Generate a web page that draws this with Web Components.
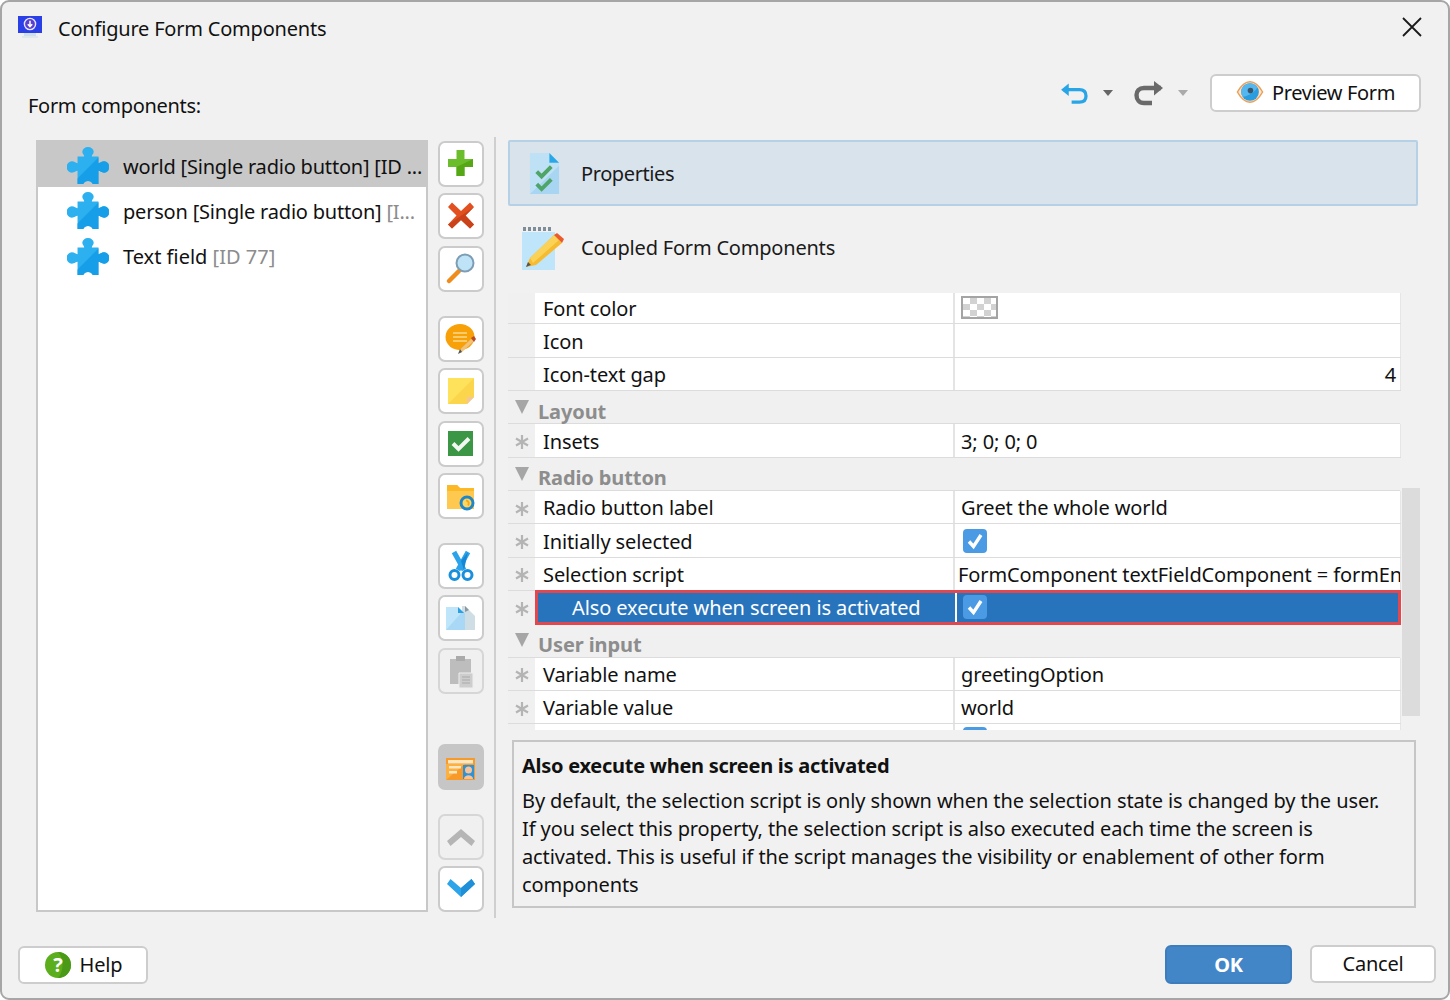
<!DOCTYPE html>
<html lang="en"><head><meta charset="utf-8"><title>Configure Form Components</title>
<style>
html,body{margin:0;padding:0;background:#fff}
body{font:20px/1.2 "Noto Sans",sans-serif;color:#111;letter-spacing:-.2px}
</style></head><body>
<x-dialog>
  <span slot="title">Configure Form Components</span>
  <span slot="label" style="letter-spacing:-.3px">Form components:</span>
  <x-history slot="actions"></x-history>
  <x-btn slot="actions" icon="eye" width="211" style="letter-spacing:-.35px">Preview Form</x-btn>

  <x-list slot="list">
    <x-item selected>world [Single radio button] [ID ...</x-item>
    <x-item>person [Single radio button] <i>[I...</i></x-item>
    <x-item style="letter-spacing:0">Text field <i>[ID 77]</i></x-item>
  </x-list>

  <x-tools slot="tools">
    <x-tool icon="plus"></x-tool><x-tool icon="cross"></x-tool><x-tool icon="search"></x-tool>
    <x-tool icon="comment" gap="24"></x-tool><x-tool icon="note"></x-tool><x-tool icon="check"></x-tool><x-tool icon="folder"></x-tool>
    <x-tool icon="cut" gap="24"></x-tool><x-tool icon="copy"></x-tool><x-tool icon="paste" disabled></x-tool>
    <x-tool icon="card" gap="50" active></x-tool>
    <x-tool icon="up" gap="24" disabled></x-tool><x-tool icon="down"></x-tool>
  </x-tools>

  <x-tab slot="pane" icon="props" active style="letter-spacing:-.4px">Properties</x-tab>
  <x-tab slot="pane" icon="pencil">Coupled Form Components</x-tab>
  <x-props slot="pane">
    <x-prop first>Font color<x-swatch slot="value"></x-swatch></x-prop>
    <x-prop>Icon</x-prop>
    <x-prop>Icon-text gap<span slot="value" style="display:block;text-align:right;padding-right:4px">4</span></x-prop>
    <x-group>Layout</x-group>
    <x-prop star>Insets<span slot="value">3; 0; 0; 0</span></x-prop>
    <x-group>Radio button</x-group>
    <x-prop star>Radio button label<span slot="value">Greet the whole world</span></x-prop>
    <x-prop star>Initially selected<x-check slot="value"></x-check></x-prop>
    <x-prop star>Selection script<span slot="value" style="margin-left:-3px">FormComponent textFieldComponent = formEn</span></x-prop>
    <x-prop star selected>Also execute when screen is activated<x-check slot="value"></x-check></x-prop>
    <x-group>User input</x-group>
    <x-prop star>Variable name<span slot="value">greetingOption</span></x-prop>
    <x-prop star>Variable value<span slot="value">world</span></x-prop>
    <x-prop><x-check slot="value" style="margin-top:-5px"></x-check></x-prop>
  </x-props>
  <x-desc slot="pane">
    <span slot="heading">Also execute when screen is activated</span>
    By default, the selection script is only shown when the selection state is changed by the user.<br>
    If you select this property, the selection script is also executed each time the screen is<br>
    activated. This is useful if the script manages the visibility or enablement of other form<br>
    components
  </x-desc>

  <x-btn slot="help" icon="help" width="130">Help</x-btn>
  <x-btn slot="ok" primary width="127">OK</x-btn>
  <x-btn slot="ok" width="126">Cancel</x-btn>
</x-dialog>

<script>
const PZ='M11 10H18C18 8 16 7.500 16 5A6 5 0 0 1 28 5C28 7.500 26 8 26 10H33V17C35 17 36 15 39 15A5.500 6 0 0 1 39 27C36 27 35 25 33 25V39H27A5.500 5.500 0 0 0 17 39H11V25C9 25 8 27 5 27A5.500 6 0 0 1 5 15C8 15 9 17 11 17Z';
const ICONS = {
  app:{vb:'0 0 28 28',s:`<rect x="2" y="2" width="24" height="17" fill="#2a3fe6"/><rect x="8" y="19" width="12" height="3" fill="#cfe0ea"/><rect x="6" y="22" width="16" height="2" fill="#dfe8ee"/><circle cx="14" cy="10" r="5.600" fill="#5b3fd0" stroke="#e7e4ff" stroke-width="1.400"/><path d="M14 6.800v5.400M11.800 10.200l2.200 2.400 2.200-2.400" fill="none" stroke="#fff" stroke-width="1.500"/>`},
  close:{vb:'0 0 20 20',s:`<path d="M1 1L19 19M19 1L1 19" stroke="#1a1a1a" stroke-width="1.800" fill="none"/>`},
  undo:{vb:'0 0 30 24',s:`<path d="M3 8H20C25 8 27 11 27 14.500S25 21 20 21H12" fill="none" stroke="#27a5e6" stroke-width="3.400"/><path d="M9 1.500V14.500L1 8Z" fill="#27a5e6"/>`},
  redo:{vb:'0 0 30 26',s:`<path d="M27 8H10C5 8 2.500 11 2.500 15S5 23 10 23H18" fill="none" stroke="#6a6a6a" stroke-width="4.400"/><path d="M20 1V15.500L29 8Z" fill="#6a6a6a"/>`},
  eye:{vb:'0 0 30 26',s:`<path d="M1.500 13C6 5 10 2 15 2S24 5 28.500 13C24 21 20 24 15 24S6 21 1.500 13Z" fill="#fbe3c8" stroke="#ec9f58" stroke-width="1.600"/><circle cx="15" cy="13" r="9.500" fill="#2a9ce0"/><path d="M15 3.500A9.500 9.500 0 0 0 7 18C12 18 20 14 23 8A9.500 9.500 0 0 0 15 3.500Z" fill="#56b7ee"/><circle cx="15.500" cy="11.500" r="3" fill="#37566e"/>`},
  help:{vb:'0 0 28 28',s:`<circle cx="14" cy="14" r="13" fill="#5cae1c"/><path d="M14 1A13 13 0 0 1 14 27C20 20 20 8 14 1Z" fill="#4a9a18"/><text x="14" y="21" text-anchor="middle" font-family="Noto Sans" font-weight="700" font-size="20" fill="#fff">?</text>`},
  puzzle:{vb:'0 0 44 40',s:`<clipPath id="pz"><path d="M44 0V40H4Z"/></clipPath><path d="${PZ}" fill="#2cb0f0"/><path clip-path="url(#pz)" d="${PZ}" fill="#169fe8"/>`},
  props:{vb:'0 0 34 44',s:`<path d="M2 1H22L32 11V43H2Z" fill="#bfe1f5"/><path d="M2 43L32 14V43Z" fill="#a8d6f2"/><path d="M22 1L32 11H22Z" fill="#28a8e8"/><path d="M9 20L14 25L24 15M9 33L14 38L24 28" fill="none" stroke="#4fa468" stroke-width="4"/>`},
  pencil:{vb:'0 0 44 44',s:`<path d="M2 6H35V44H2Z" fill="#bfe5fa"/><path d="M3 1h3v4H3zM8 1h3v4H8zM13 1h3v4h-3zM18 1h3v4h-3zM23 1h3v4h-3zM28 1h3v4h-3z" fill="#7d8d99"/><path d="M34 9L42 17L16 39L6 41L10 32Z" fill="#f7bb30"/><path d="M34 9L39 14L13 37L10 32Z" fill="#fbd258"/><path d="M34 9L37 7L44 13L42 17Z" fill="#ea5a2a"/><path d="M6 41L8 36L11 39Z" fill="#555"/>`},
  plus:{s:`<path d="M18.500 9H26.500V18H35V26H26.500V35H18.500V26H10V18H18.500Z" fill="#6cbd2c"/><path d="M35 18V26H26.500V35H18.500V26Z" fill="#55a716"/>`},
  cross:{s:`<path d="M10 14L14 9.500L23 18L32 9.500L36 14L27.500 22.500L36 31.500L32 35.500L23 27L14 35.500L10 31.500L18.500 22.500Z" fill="#e2501f"/><path d="M36 14L27.500 22.500L36 31.500L32 35.500L23 27L14 35.500L10 31.500Z" fill="#c9421a"/>`},
  search:{s:`<path d="M21 25L11 35" stroke="#f08c1c" stroke-width="4.500" stroke-linecap="round"/><circle cx="27" cy="17" r="8.500" fill="#bfe3f7" stroke="#7d9db5" stroke-width="2"/>`},
  comment:{s:`<ellipse cx="22" cy="21" rx="14.500" ry="13" fill="#f7a008"/><path d="M15 17H29M15 21H29M15 25H29" stroke="#fdd98a" stroke-width="1.600"/><path d="M36 25L24 36L21 37L22 33.500L33 23Z" fill="#f0c27a"/><path d="M33 22L36 20L38 23L36 26Z" fill="#b84a2a"/><path d="M22 33L24 36L20 38Z" fill="#555"/>`},
  note:{s:`<path d="M10 10H36V29L29 36H10Z" fill="#ffe25c"/><path d="M10 36L36 10V29L29 36Z" fill="#fbd54c"/><path d="M29 36V29H36Z" fill="#f3c6a0"/>`},
  check:{s:`<rect x="10" y="10" width="25" height="25" fill="#3b9646"/><path d="M15 22.500L20.500 28L31 17.500" fill="none" stroke="#f2f7f2" stroke-width="4"/>`},
  folder:{s:`<path d="M9 12H19L22 15H36V36H9Z" fill="#ffc94f"/><path d="M9 12H19L22 15H36V18H9Z" fill="#fdb825"/><circle cx="29" cy="30" r="6" fill="#ffd75e" stroke="#1f87c9" stroke-width="3"/><path d="M28 27.500a3 3 0 0 1 2 5" stroke="#f8a81d" stroke-width="2" fill="none"/>`},
  cut:{s:`<path d="M16 9L26 27M30 9L20 27" stroke="#2ba3ea" stroke-width="5"/><path d="M23 18L30 9L26 27Z" fill="#1488d6"/><circle cx="16.500" cy="32" r="4.500" fill="#fff" stroke="#1a8fdc" stroke-width="3"/><circle cx="29.500" cy="32" r="4.500" fill="#fff" stroke="#1a8fdc" stroke-width="3"/>`},
  copy:{s:`<path d="M27 11L37 21V35H24V11Z" fill="#cfdde4"/><path d="M27 11L31 15L27 17Z" fill="#8a98a3"/><path d="M8 12H20L27 19V35H8Z" fill="#bfe5fa"/><path d="M8 35L25 16L27 19V35Z" fill="#a8d8f5"/><path d="M20 12L26 18H20Z" fill="#2aa0e2"/>`},
  paste:{s:`<path d="M12 11H33V36H12Z" fill="#bdbdbd"/><path d="M18 8H27V13H18Z" fill="#aaa"/><path d="M21 25H35V40H21Z" fill="#cdcdcd" stroke="#eee" stroke-width="1"/><path d="M24 29H32M24 32H32M24 35H32" stroke="#a9a9a9" stroke-width="1.200"/>`},
  card:{s:`<rect x="8" y="14" width="29" height="22" fill="#f79a2a"/><path d="M8 36L27 20H8Z" fill="#fbb040"/><rect x="10" y="16" width="25" height="3.500" fill="#fde6c0"/><rect x="11" y="22" width="12" height="2.500" fill="#fde6c0"/><rect x="11" y="27" width="8" height="2.500" fill="#fde6c0"/><rect x="25" y="21" width="11" height="14" fill="#2d93d6"/><circle cx="30.500" cy="26" r="3.500" fill="#f6c39a"/><path d="M26 35C26 30 35 30 35 35Z" fill="#f6c39a"/>`},
  up:{s:`<path d="M23 15L37 27L33.500 32L23 23L12.500 32L9 27Z" fill="#b5b5b5"/>`},
  down:{s:`<path d="M9 18L12.500 13L23 22L33.500 13L37 18L23 31Z" fill="#2ba4e9"/><path d="M23 22L33.500 13L37 18L23 31Z" fill="#1e8fd8"/>`}
};
function def(name, css, html, init){
  customElements.define(name, class extends HTMLElement{
    constructor(){super();const r=this.attachShadow({mode:'open'});r.innerHTML=`<style>${css}</style>${html}`;}
    connectedCallback(){init&&init(this,this.shadowRoot);}
  });
}
function svg(n,w,h){const i=ICONS[n];return `<svg xmlns="http://www.w3.org/2000/svg" width="${w}" height="${h||w}" viewBox="${i.vb||'2 2 42 42'}">${i.s}</svg>`;}

def('x-dialog',`
 :host{display:flex;flex-direction:column;box-sizing:border-box;width:1450px;height:1000px;background:#f1f1f1;border:2px solid #a6a6a6;border-radius:9px;overflow:hidden}
 .title{display:flex;align-items:center;height:52px;padding-left:14px;flex:none}
 .title .ic{width:28px;height:28px;margin-top:0;margin-right:14px;display:block}
 .title .t{flex:1;padding-top:2px}
 .title .x{margin-right:26px;margin-top:-2px;display:block;height:20px}
 .head{display:flex;align-items:center;height:86px;flex:none;padding:0 27px 0 26px}
 .head .l{flex:1;margin-top:17px}
 .head .r{display:flex;align-items:center;margin-top:-8px}
 .main{display:flex;flex:none;height:775px;padding-left:34px}
 .sep{width:2px;background:#cfcfcf;margin:-3px 12px -3px 10px;flex:none}
 .pane{display:flex;flex-direction:column;width:912px}
 .foot{flex:1;display:flex;justify-content:space-between;align-items:flex-start;padding:31px 12px 0 16px}
 .ok{display:flex;gap:18px;margin-top:-1px}
`,`
 <div class="title"><span class="ic" id="ic"></span><span class="t"><slot name="title"></slot></span><span class="x" id="x"></span></div>
 <div class="head"><span class="l"><slot name="label"></slot></span><span class="r"><slot name="actions"></slot></span></div>
 <div class="main"><slot name="list"></slot><slot name="tools"></slot><div class="sep"></div><div class="pane"><slot name="pane"></slot></div></div>
 <div class="foot"><slot name="help"></slot><div class="ok"><slot name="ok"></slot></div></div>
`,(h,r)=>{r.getElementById('ic').innerHTML=svg('app',28);r.getElementById('x').innerHTML=svg('close',20);});

def('x-history',`
 :host{display:flex;align-items:center;margin-right:22px}
 svg{display:block}
 .t{width:0;height:0;border-left:5px solid transparent;border-right:5px solid transparent;border-top:6px solid #666;margin:0 21px 0 14px}
 .t.b{border-top-color:#aaa;margin:0 0 0 14px}
`,`<span id="u"></span><span class="t"></span><span id="v"></span><span class="t b"></span>`,(h,r)=>{r.getElementById('u').innerHTML=svg('undo',29,23);r.getElementById('v').innerHTML=svg('redo',30,26);});

def('x-btn',`
 :host{display:flex;align-items:center;justify-content:center;gap:8px;box-sizing:border-box;height:38px;background:#fff;border:2px solid #cdcdcd;border-radius:6px}
 :host([primary]){background:#4386c8;border-color:#3d7dbd;color:#fff;font-weight:700;height:39px}
 span{display:block;height:28px}
 svg{display:block}
`,`<span id="i"></span><slot></slot>`,(h,r)=>{
  h.style.width=h.getAttribute('width')+'px';
  const n=h.getAttribute('icon'),i=r.getElementById('i');
  if(n)i.innerHTML=svg(n,28,n=='eye'?26:28);else i.remove();
});

def('x-list',`
 :host{display:block;box-sizing:border-box;width:392px;height:772px;background:#fff;border:2px solid #c8c8c8;margin-right:10px}
`,`<slot></slot>`);

def('x-item',`
 :host{display:flex;align-items:center;height:45.300px;box-sizing:border-box;padding-left:29px;white-space:nowrap;overflow:hidden}
 :host([selected]){background:#c8c8c8}
 #i{display:block;width:42px;height:38px;margin-right:14px;margin-top:3px}
 #t{padding-top:4px}
 svg{display:block}
 ::slotted(i){font-style:normal;color:#8c8c8c}
`,`<span id="i"></span><span id="t"><slot></slot></span>`,(h,r)=>{r.getElementById('i').innerHTML=svg('puzzle',42,38);});

def('x-tools',`:host{display:flex;flex-direction:column;width:46px;flex:none;padding-top:1px;gap:6.400px}`,`<slot></slot>`);

def('x-tool',`
 :host{display:grid;place-items:center;box-sizing:border-box;width:46px;height:46px;background:#fff;border:2px solid #cbcbcb;border-radius:7px}
 :host([disabled]){background:#f0f0f0;border-color:#d6d6d6}
 :host([active]){background:#c6c6c6;border-color:#c6c6c6}
 svg{display:block}
`,``,(h,r)=>{
  r.innerHTML+=svg(h.getAttribute('icon'),42);
  const g=h.getAttribute('gap');if(g)h.style.marginTop=(g-6.4)+'px';
});

def('x-tab',`
 :host{display:flex;align-items:center;box-sizing:border-box;height:66px;width:910px;flex:none;color:#1a1a1a}
 :host([active]){background:#d9e3ec;border:2px solid #b6d0e6;border-radius:2px;margin-bottom:9px}
 :host([active]) #i{margin:0 20px 0 18px}
 :host([active]) #t{padding-top:2px}
 #i{display:block;margin:0 17px 0 12px;line-height:0}
`,`<span id="i"></span><span id="t"><slot></slot></span>`,(h,r)=>{const n=h.getAttribute('icon');r.getElementById('i').innerHTML=n=='props'?svg(n,33,43):svg(n,44,44);});

def('x-props',`
 :host{display:flex;flex:none;height:437px;margin-top:12px;overflow:hidden;letter-spacing:-.1px}
 .t{width:893px;height:437px;overflow:hidden;flex:none}
 .sb{width:18px;flex:none;margin-left:1px;padding-top:195px;box-sizing:border-box;height:437px}
 .th{height:228px;background:#dcdcdc}
`,`<div class="t"><slot></slot></div><div class="sb"><div class="th"></div></div>`);

def('x-group',`
 :host{display:flex;align-items:center;box-sizing:border-box;width:892px;height:33.330px;border-bottom:1.500px solid #dcdcdc;background:#f0f0f0;color:#8d8d8d;font-weight:700;padding-left:7px}
 .tri{width:0;height:0;border-left:7.500px solid transparent;border-right:7.500px solid transparent;border-top:14px solid #a6a6a6;margin:0 9px 0 0}
 span{display:block;margin-top:9px}
`,`<div class="tri"></div><span><slot></slot></span>`);

def('x-prop',`
 :host{display:flex;box-sizing:border-box;width:893px;height:33.330px;border-bottom:1.500px solid #dcdcdc;position:relative}
 :host([first]){height:31.330px}
 .g{width:27px;flex:none;display:grid;place-items:center;background:#f0f0f0}
 .g svg{display:none;margin-top:3px}
 :host([star]) .g svg{display:block}
 .b{flex:1;display:flex;background:#fff;min-width:0;border-right:1px solid #e6e6e6}
 .n{width:420px;flex:none;box-sizing:border-box;padding:2.500px 0 0 8px;border-right:2px solid #e4e4e4;display:flex;align-items:center;white-space:nowrap}
 .v{flex:1;min-width:0;box-sizing:border-box;padding:2.500px 0 0 6px;display:flex;align-items:center;white-space:nowrap;overflow:hidden}
 :host([first]) .n{padding-top:1px}
 ::slotted([slot=value]){flex:1}
 :host([selected]){border-bottom:0;z-index:1}
 :host([selected]) .b{background:#2874bc;color:#fff;border:3px solid #e0474f;margin:-1px 0}
 :host([selected]) .n{padding:0 0 0 34px;border-right:0;width:417px}
 :host([selected]) .v{border-left:2px solid #fff;padding:0 0 0 4px}
`,`<div class="g"><svg width="14" height="14" viewBox="0 0 14 14"><path d="M7 0V14M1 3.500L13 10.500M13 3.500L1 10.500" stroke="#b4b4b4" stroke-width="2.200" fill="none"/></svg></div>
<div class="b"><div class="n"><slot></slot></div><div class="v"><slot name="value"></slot></div></div>`);

def('x-check',`
 :host{display:block;flex:none!important;width:24px;height:24px;margin-top:-1px;background:#4a9ae4;border-radius:4px;margin-left:2px}
 svg{display:block}
`,`<svg width="24" height="24" viewBox="0 0 24 24"><path d="M6 12.500L10.500 17.500L18 6" fill="none" stroke="#fff" stroke-width="3.400"/></svg>`);

def('x-swatch',`
 :host{display:block;flex:none!important;box-sizing:border-box;width:37px;height:23px;margin-top:-3px;border:2px solid #a4a4a4;background:conic-gradient(#d2d2d2 25%,#fff 0 50%,#d2d2d2 0 75%,#fff 0) 0 0/14px 12px;background-color:#fff}
`,``);

def('x-desc',`
 :host{display:block;box-sizing:border-box;width:904px;height:168px;margin:10px 0 0 4px;border:2px solid #c6c6c6;padding:10px 8px 0;line-height:28px;white-space:nowrap;overflow:hidden;letter-spacing:-.1px}
 .h{font-weight:700;height:35px;letter-spacing:-.27px}
`,`<div class="h"><slot name="heading"></slot></div><slot></slot>`);
</script>
</body></html>
